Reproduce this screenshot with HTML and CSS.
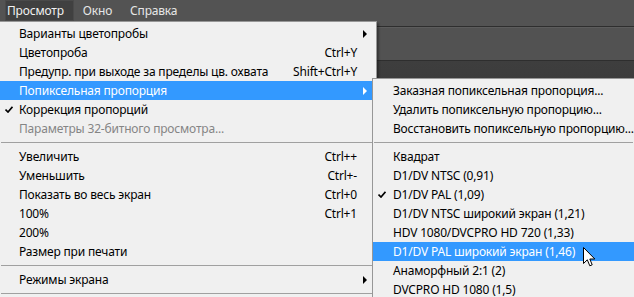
FILE: index.html
```html
<!DOCTYPE html>
<html lang="ru">
<head>
<meta charset="utf-8">
<title>Просмотр</title>
<link rel="stylesheet" href="styles.css">
</head>
<body>
<div class="menubar">
  <span class="mb-item active">Просмотр</span>
  <span class="mb-item">Окно</span>
  <span class="mb-item">Справка</span>
</div>
<div class="workspace">
  <div class="band band-a"></div>
  <div class="band band-b"></div>
  <div class="band band-c"></div>
</div>

<div class="menu main">
  <div class="item"><span class="check"></span><span class="label">Варианты цветопробы</span><span class="key"></span><span class="arr"><i class="tri"></i></span></div>
  <div class="item"><span class="check"></span><span class="label">Цветопроба</span><span class="key">Ctrl+Y</span><span class="arr"></span></div>
  <div class="item"><span class="check"></span><span class="label">Предупр. при выходе за пределы цв. охвата</span><span class="key">Shift+Ctrl+Y</span><span class="arr"></span></div>
  <div class="item hl"><span class="check"></span><span class="label">Попиксельная пропорция</span><span class="key"></span><span class="arr"><i class="tri"></i></span></div>
  <div class="item"><span class="check"><svg class="tick" viewBox="0 0 8 7" width="8" height="7"><path d="M0.5 3.6 L3 6 L7.5 0.8" fill="none" stroke="#000" stroke-width="1.7"/></svg></span><span class="label">Коррекция пропорций</span><span class="key"></span><span class="arr"></span></div>
  <div class="item disabled"><span class="check"></span><span class="label">Параметры 32-битного просмотра...</span><span class="key"></span><span class="arr"></span></div>
  <div class="sep"></div>
  <div class="item"><span class="check"></span><span class="label">Увеличить</span><span class="key">Ctrl++</span><span class="arr"></span></div>
  <div class="item"><span class="check"></span><span class="label">Уменьшить</span><span class="key">Ctrl+-</span><span class="arr"></span></div>
  <div class="item"><span class="check"></span><span class="label">Показать во весь экран</span><span class="key">Ctrl+0</span><span class="arr"></span></div>
  <div class="item"><span class="check"></span><span class="label">100%</span><span class="key">Ctrl+1</span><span class="arr"></span></div>
  <div class="item"><span class="check"></span><span class="label">200%</span><span class="key"></span><span class="arr"></span></div>
  <div class="item"><span class="check"></span><span class="label">Размер при печати</span><span class="key"></span><span class="arr"></span></div>
  <div class="sep"></div>
  <div class="item"><span class="check"></span><span class="label">Режимы экрана</span><span class="key"></span><span class="arr"><i class="tri"></i></span></div>
  <div class="sep"></div>
</div>

<div class="menu submenu">
  <div class="item"><span class="check"></span><span class="label">Заказная попиксельная пропорция...</span></div>
  <div class="item"><span class="check"></span><span class="label">Удалить попиксельную пропорцию...</span></div>
  <div class="item"><span class="check"></span><span class="label">Восстановить попиксельную пропорцию...</span></div>
  <div class="sep"></div>
  <div class="item"><span class="check"></span><span class="label">Квадрат</span></div>
  <div class="item"><span class="check"></span><span class="label">D1/DV NTSC (0,91)</span></div>
  <div class="item"><span class="check"><svg class="tick" viewBox="0 0 8 7" width="8" height="7"><path d="M0.5 3.6 L3 6 L7.5 0.8" fill="none" stroke="#000" stroke-width="1.7"/></svg></span><span class="label">D1/DV PAL (1,09)</span></div>
  <div class="item"><span class="check"></span><span class="label">D1/DV NTSC широкий экран (1,21)</span></div>
  <div class="item"><span class="check"></span><span class="label">HDV 1080/DVCPRO HD 720 (1,33)</span></div>
  <div class="item hl"><span class="check"></span><span class="label">D1/DV PAL широкий экран (1,46)</span></div>
  <div class="item"><span class="check"></span><span class="label">Анаморфный 2:1 (2)</span></div>
  <div class="item"><span class="check"></span><span class="label">DVCPRO HD 1080 (1,5)</span></div>
</div>

<svg class="cursor" width="14" height="21" viewBox="0 0 14 21">
  <path d="M0.5 0.5 L0.5 16.5 L4.3 12.8 L6.8 18.8 L9.2 17.8 L6.8 12 L11.8 12 Z" fill="#fff" stroke="#000" stroke-width="1" stroke-linejoin="miter"/>
</svg>
</body>
</html>
```

FILE: styles.css
```css
* { box-sizing: border-box; }
html, body {
  margin: 0;
  padding: 0;
  width: 634px;
  height: 297px;
  overflow: hidden;
  background: #535353;
  font-family: "Noto Sans", "Segoe UI", sans-serif;
  font-size: 12px;
  letter-spacing: -0.18px;
}
.menubar {
  height: 21px;
  display: flex;
  align-items: stretch;
  padding-left: 5px;
  background: #535353;
}
.mb-item {
  color: #e6e6e6;
  line-height: 21px;
  padding: 0 9px 0 2px;
  margin-right: 7px;
}
.mb-item.active {
  background: #404040;
  box-shadow: inset 0 0 0 1px #4a4a4a;
  color: #f2f2f2;
  padding: 0 10px 0 2px;
}
.workspace {
  display: flex;
  flex-direction: column;
}
.band-a {
  height: 6px;
  background: #535353;
  border-bottom: 1px solid #2e2e2e;
}
.band-b {
  height: 34px;
  background: #525252;
  border-top: 1px solid #5c5c5c;
  border-bottom: 1px solid #2e2e2e;
}
.band-c {
  height: 40px;
  background: linear-gradient(#3e3e3e, #3a3a3a);
}
.menu {
  position: absolute;
  background: #f0f0f0;
  border: 1px solid #979797;
  border-bottom: none;
  color: #000;
  padding-top: 2px;
  overflow: hidden;
  box-shadow: 2px 2px 2px rgba(0,0,0,0.35);
}
.main {
  top: 21px;
  left: -1px;
  width: 378px;
  height: 276px;
}
.submenu {
  top: 78px;
  left: 372px;
  width: 262px;
  border-right: none;
  height: 219px;
}
.item {
  display: flex;
  align-items: center;
  height: 19px;
  line-height: 19px;
  white-space: nowrap;
  flex: none;
}
.item.hl {
  background: #3399ff;
  color: #fff;
}
.item.disabled { color: #858585; }
.check {
  width: 19px;
  flex: none;
  display: flex;
  align-items: center;
  padding-left: 5px;
}
.submenu .check { width: 20px; padding-left: 5px; }
.tick { display: block; }
.label { flex: 1; }
.key { flex: none; text-align: right; }
.arr {
  width: 19px;
  flex: none;
  display: flex;
  align-items: center;
  padding-left: 6px;
}
.tri {
  display: block;
  width: 0;
  height: 0;
  border-top: 4px solid transparent;
  border-bottom: 4px solid transparent;
  border-left: 4px solid #000;
}
.hl .tri { border-left-color: #fff; }
.sep {
  height: 9px;
  display: flex;
  flex-direction: column;
  justify-content: center;
  padding: 0 1px;
}
.sep::before {
  content: "";
  display: block;
  height: 1px;
  background: #a0a0a0;
}
.cursor {
  position: absolute;
  left: 583px;
  top: 247px;
}
```
